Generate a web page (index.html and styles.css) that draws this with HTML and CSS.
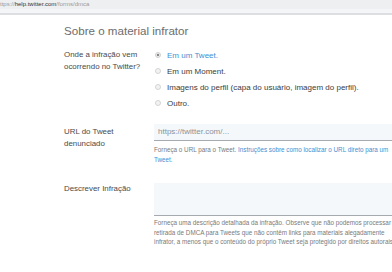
FILE: index.html
```html
<!DOCTYPE html>
<html lang="pt">
<head>
    <meta charset="UTF-8">
    <title>Sobre o material infrator</title>
    <link rel="stylesheet" href="styles.css">
</head>
<body>
    <div class="address-bar">
        <span class="dim">ttps://</span><span class="host">help.twitter.com</span><span class="dim">/forms/dmca</span>
    </div>

    <div class="form">
        <h2>Sobre o material infrator</h2>

        <div class="row">
            <div class="label label-top">Onde a infração vem<br>ocorrendo no Twitter?</div>
            <div class="options">
                <div class="option selected"><span class="radio"></span>Em um Tweet.</div>
                <div class="option"><span class="radio"></span>Em um Moment.</div>
                <div class="option"><span class="radio"></span>Imagens do perfil (capa do usuário, imagem do perfil).</div>
                <div class="option"><span class="radio"></span>Outro.</div>
            </div>
        </div>

        <div class="row row-url">
            <div class="label label-top">URL do Tweet<br>denunciado</div>
            <div class="field">
                <div class="input">https://twitter.com/...</div>
                <div class="help help-first">Forneça o URL para o Tweet. <a href="#">Instruções sobre como localizar o URL direto para um</a><br><a href="#">Tweet</a>.</div>
            </div>
        </div>

        <div class="row row-desc">
            <div class="label">Descrever Infração</div>
            <div class="field">
                <div class="textarea"></div>
                <div class="help">Forneça uma descrição detalhada da infração. Observe que não podemos processar uma<br>retirada de DMCA para Tweets que não contêm links para materiais alegadamente<br>infrator, a menos que o conteúdo do próprio Tweet seja protegido por direitos autorais.</div>
            </div>
        </div>
    </div>
</body>
</html>
```

FILE: styles.css
```css
body {
    margin: 0;
    font-family: "Liberation Sans", Arial, sans-serif;
    background: #fff;
    overflow: hidden;
}
.address-bar {
    height: 9px;
    background: #eeeff1;
    border-bottom: 4px solid #f4f5f7;
    box-shadow: 0 2px 0 #dcdee1;
    font-size: 6px;
    line-height: 9px;
    white-space: nowrap;
    position: relative;
}
.dim {
    color: #9a9a9a;
}
.host {
    color: #333;
}
.form {
    padding-left: 64px;
    width: 500px;
}
h2 {
    margin: 12px 0 10px;
    font-size: 11.6px;
    line-height: 12px;
    font-weight: normal;
    color: #6d6d6d;
}
.row {
    display: grid;
    grid-template-columns: 90px 1fr;
}
.label {
    font-size: 7.9px;
    line-height: 12px;
    color: #4a4a4a;
}
.label-top {
    padding-top: 2px;
}
.options {
    font-size: 8px;
    color: #3c3c3c;
}
.option {
    display: flex;
    align-items: center;
    height: 16px;
    white-space: nowrap;
}
.option.selected {
    color: #3f8fd2;
}
.radio {
    width: 4px;
    height: 4px;
    border: 1px solid #d4d4d4;
    border-radius: 50%;
    background: #f3f3f3;
    margin: 0 6px 0 1px;
}
.selected .radio {
    background: radial-gradient(circle, #888 0 1.2px, #eee 1.6px);
    border-color: #cfcfcf;
}
.row-url {
    margin-top: 13px;
}
.row-desc {
    margin-top: 19px;
}
.input {
    height: 17px;
    box-sizing: border-box;
    padding-left: 4px;
    background: #f5f8fa;
    border-bottom: 1px solid #a5aab0;
    font-size: 8px;
    line-height: 16px;
    color: #8a9199;
}
.textarea {
    height: 33px;
    box-sizing: border-box;
    background: #f5f8fa;
    border-bottom: 1px solid #a5aab0;
}
.help {
    margin-top: 2px;
    font-size: 6.3px;
    line-height: 9.5px;
    color: #7a7a7a;
    white-space: nowrap;
}
.help-first {
    margin-top: 4px;
}
.help a {
    color: #3f8fd2;
    text-decoration: none;
}
```
